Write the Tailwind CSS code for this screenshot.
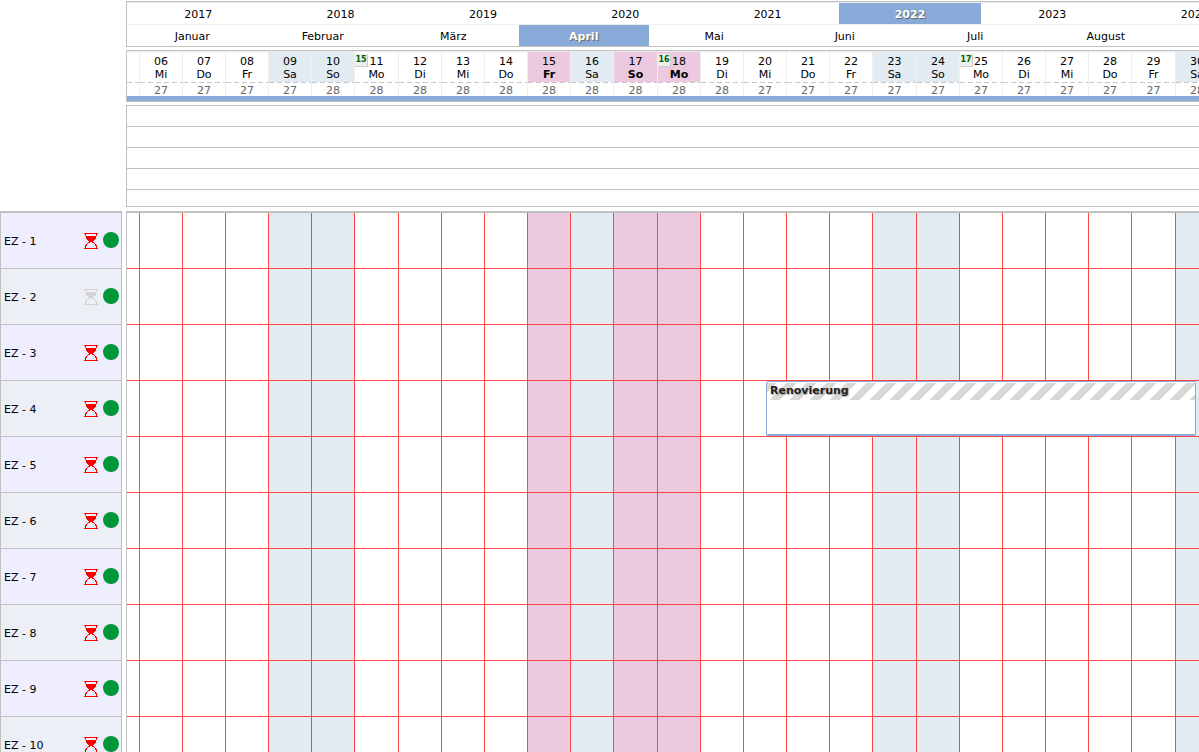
<!DOCTYPE html>
<html lang="de">
<head>
<meta charset="utf-8">
<title>Belegungsplan</title>
<script src="https://cdn.jsdelivr.net/npm/@tailwindcss/browser@4"></script>
</head>
<body class="h-screen overflow-hidden bg-white font-['DejaVu_Sans',sans-serif] text-[11px] leading-[13px] text-black">
<svg class="hidden">
  <symbol id="hourglass" viewBox="0 0 14 16">
    <path fill="currentColor" d="M0 0h14v1H0zM0 15h14v1H0zM1 1h1v2H1zM12 1h1v2h-1zM2 3h10v3H11v1h-1v1H9v1H5V8H4V7H3V6H2zM4 9h2v1H4zM8 9h2v1H8zM3 10h1v1H3zM10 10h1v1h-1zM2 11h1v2H2zM11 11h1v2h-1zM1 12h1v3H1zM12 12h1v3h-1z"/>
  </symbol>
</svg>

<header class="ml-[126px] overflow-hidden pt-px">
  <nav aria-label="Jahr und Monat" class="overflow-hidden border border-r-0 border-[#c0c0c0] text-center">
    <div id="years" class="grid h-[23px] w-[1566px] grid-cols-11 border-y border-[#eeeeee]"></div>
    <div id="months" class="grid h-[21px] w-[1566px] grid-cols-12"></div>
  </nav>
  <div class="mt-[3px] overflow-hidden border border-r-0 border-[#c0c0c0]">
    <div id="days" class="flex w-max border-t border-[#eeeeee]"></div>
    <div class="h-[5px] bg-[#88aad8]"></div>
  </div>
  <div class="mt-[3px] divide-y divide-[#c0c0c0] border border-r-0 border-[#c0c0c0]">
    <div class="h-[21px]"></div>
    <div class="h-[21px]"></div>
    <div class="h-[21px]"></div>
    <div class="h-[21px]"></div>
    <div class="h-4"></div>
  </div>
</header>

<main class="mt-1 flex gap-1">
  <ul id="rooms" class="w-[122px] shrink-0 border-x border-t-2 border-[#c0c0c0]"></ul>
  <div class="relative min-w-0 flex-1 overflow-hidden border-t-2 border-l border-[#c0c0c0]">
    <div id="plan"></div>
    <a href="#renovierung" class="absolute top-[168px] left-[639px] h-[55px] w-[430px] rounded-xs border border-b-2 border-[#88aad8] bg-white">
      <span class="mt-px block h-[17px] bg-[linear-gradient(135deg,#d8d8d6_25%,transparent_25%,transparent_50%,#d8d8d6_50%,#d8d8d6_75%,transparent_75%)] bg-[length:20px_20px] pt-px pl-[3px] font-bold text-[#222222] [text-shadow:1px_1px_1px_#aaaaaa]">Renovierung</span>
    </a>
  </div>
</main>

<script>
  const years = ['2017', '2018', '2019', '2020', '2021', '2022', '2023', '2024'];
  const months = ['Januar', 'Februar', 'März', 'April', 'Mai', 'Juni', 'Juli', 'August'];
  const active = 'block bg-[#88aad8] pt-[5px] font-bold text-white [text-shadow:1px_1px_1px_#666666]';
  const plain = 'block pt-[5px]';
  const link = (name, on) => `<a href="#${name}" class="${on ? active : plain}">${name}</a>`;
  document.getElementById('years').innerHTML = years.map(y => link(y, y === '2022')).join('');
  document.getElementById('months').innerHTML = months.map(m => link(m, m === 'April')).join('');

  const names = ['So', 'Mo', 'Di', 'Mi', 'Do', 'Fr', 'Sa'];
  const free = [27, 27, 27, 27, 28, 28, 28, 28, 28, 28, 28, 28, 28, 28, 27, 27, 27, 27, 27, 27, 27, 27, 27, 27, 28];
  const weeks = { 11: 15, 18: 16, 25: 17 };
  const holidays = [15, 17, 18];
  const days = free.map((count, i) => {
    const day = i + 6, name = names[(i + 3) % 7];
    const holiday = holidays.includes(day);
    return {
      day, name, count, holiday, week: weeks[day],
      width: i % 6 === 5 ? 'w-[44px]' : 'w-[43px]',
      tint: holiday ? 'bg-[#edc9df]' : name === 'Sa' || name === 'So' ? 'bg-[#e1ebf1]' : 'bg-white',
    };
  });

  const dashes = '<div class="h-px bg-[repeating-linear-gradient(90deg,#c8c8c8_0px,#c8c8c8_5px,#ffffff_5px,#ffffff_8px)]"></div>';
  document.getElementById('days').innerHTML =
    `<div class="w-3 pt-[30px]">${dashes}</div>` +
    days.map(d => `<div class="relative ${d.width} border-l border-[#eeeeee] text-center">
      <div class="h-[30px] pt-[3px] ${d.tint}">
        <div>${String(d.day).padStart(2, '0')}</div>
        <div class="${d.holiday ? 'font-bold' : ''}">${d.name}</div>
      </div>
      ${dashes}
      <div class="h-[13px] pt-px text-[#666666]">${d.count}</div>
      ${d.week ? `<span class="absolute top-0.5 left-0 h-[13px] w-[13px] border-r border-b border-[#cccccc] bg-[#eeeeee] text-[8px] leading-3 font-bold text-[#006400]">${d.week}</span>` : ''}
    </div>`).join('');

  const roomCount = 10;
  const rooms = Array.from({ length: roomCount }, (_, i) => i + 1);
  document.getElementById('rooms').innerHTML = rooms.map(n => `
    <li class="flex h-14 items-center border-b border-[#c0c0c0] pr-0.5 pl-[3px] ${n % 2 ? 'bg-[#eeeeff]' : 'bg-[#eceff6]'}">
      <span class="flex-1 pt-0.5">EZ - ${n}</span>
      <svg class="mr-[5px] h-4 w-3.5 ${n === 2 ? 'text-[#d3d3d3]' : 'text-[#ff0000]'}" shape-rendering="crispEdges"><use href="#hourglass"/></svg>
      <span class="mb-0.5 size-4 rounded-full bg-[#009639]"></span>
    </li>`).join('');
  const cells = days.map(d => `<div class="${d.width} border-l border-[#ff4444] ${d.tint}"></div>`).join('');
  document.getElementById('plan').innerHTML = rooms.map(() =>
    `<div class="flex h-14 w-max border-b border-[#ff4444] pl-3">${cells}</div>`).join('');
</script>
</body>
</html>
